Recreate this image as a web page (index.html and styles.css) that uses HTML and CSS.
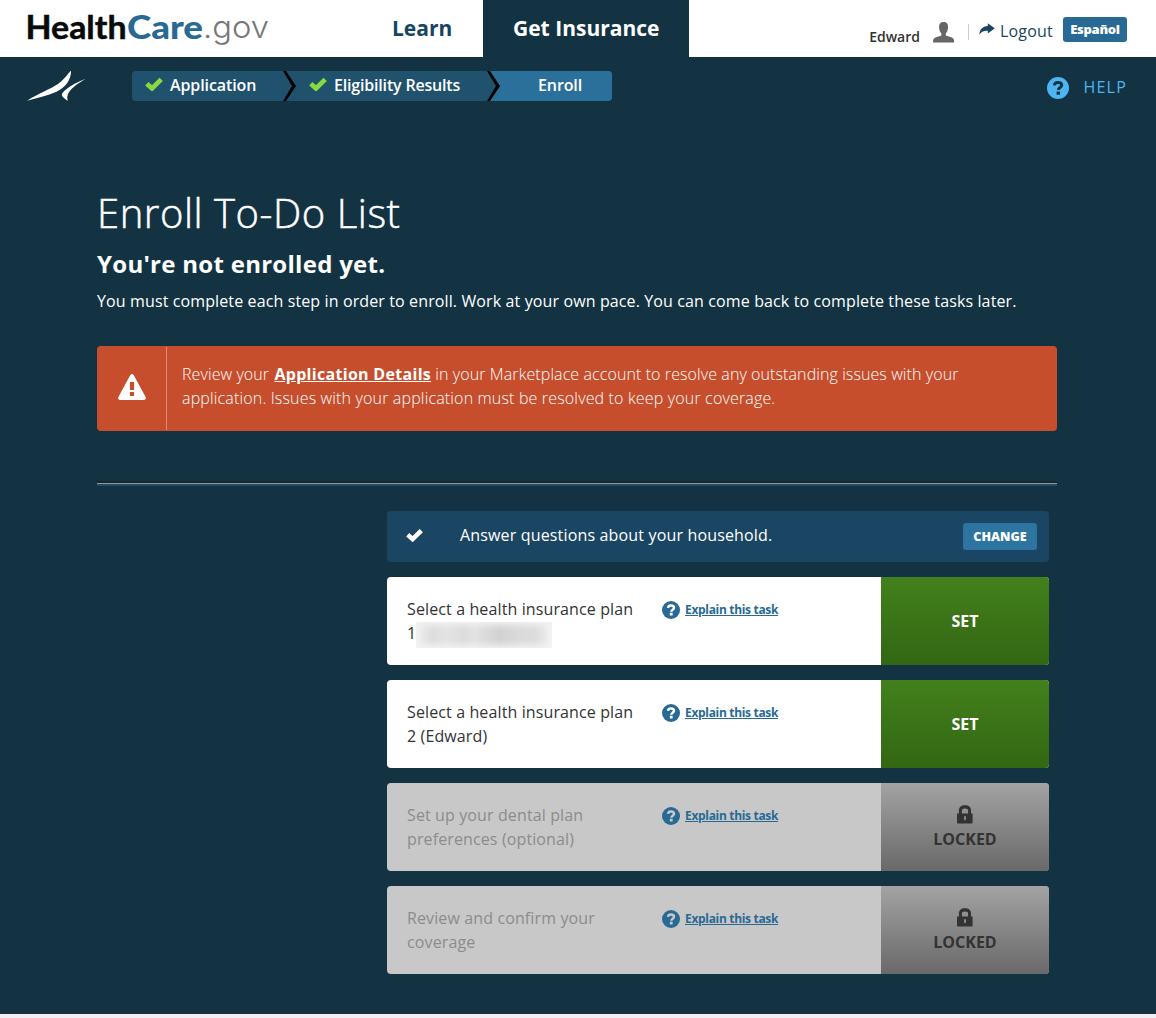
FILE: index.html
```html
<!DOCTYPE html>
<html lang="en">
<head>
<meta charset="utf-8">
<title>Enroll To-Do List | HealthCare.gov</title>
<link rel="stylesheet" href="styles.css">
</head>
<body>
<svg class="defs" aria-hidden="true">
  <symbol id="check" viewBox="0 0 18 14"><path d="M1.800 6.800 7 11.400 16.200 2.400" fill="none" stroke="currentColor" stroke-width="4.800"/></symbol>
  <symbol id="help" viewBox="0 0 22 22"><circle cx="11" cy="11" r="11" fill="currentColor"/><path d="M7.400 8.300C7.600 6.400 9 5.500 11 5.500c2.200 0 3.700 1 3.700 2.800 0 2.300-3.300 2.300-3.300 4.700" fill="none" stroke="var(--mark)" stroke-width="3"/><path d="M9.600 14.500h3.400v3.200H9.600z" fill="var(--mark)"/></symbol>
  <symbol id="lock" viewBox="0 0 16 19"><path fill-rule="evenodd" d="M0 8.500h1.900V5.600C1.900 2.200 3.900.2 8 .2s6 2 6 5.400v2.900h1.600v9.300q0 .8-.8.800H.8q-.8 0-.8-.8zM4.900 8.500h6.200V5.900c0-1.700-.8-2.400-3.100-2.400s-3.100.7-3.100 2.400zM7 11.300v2.100l.4 1.800h1.200l.4-1.800v-2.100z" fill="currentColor"/></symbol>
</svg>

<header class="topbar">
  <a class="logo">
    <svg width="246" height="44" viewBox="0 0 246 44">
      <text class="logo-health" x="-1.500" y="32" textLength="101" lengthAdjust="spacingAndGlyphs">Health</text>
      <text class="logo-care" x="100" y="32" textLength="76" lengthAdjust="spacingAndGlyphs">Care</text>
      <text class="logo-gov" x="176" y="31" textLength="66" lengthAdjust="spacingAndGlyphs">.gov</text>
    </svg>
  </a>
  <nav class="nav">
    <a class="nav-item">Learn</a>
    <a class="nav-item active">Get Insurance</a>
  </nav>
  <div class="account">
    <span class="user">Edward</span>
    <svg class="avatar" width="22" height="21" viewBox="0 0 22 21"><path d="M10.500 0C13.800 0 15.200 2 15 5.200c-.1 2.800-.9 5-2.200 6.200v2l6 2.200c1.700.7 2.400 1.900 2.400 4.900H0c0-3 .7-4.200 2.400-4.900l6-2.200v-2C7 10.200 6.200 8 6.100 5.200 5.900 2 7.300 0 10.500 0z" fill="#666"/></svg>
    <span class="divider"></span>
    <svg class="arrow" width="16" height="12" viewBox="0 0 16 12"><path d="M8.800.2 15.800 5.200 8.800 10.600V7.700C4.600 7.500 2.200 8.800.3 11.500.7 6.300 3.600 3.300 8.800 3z" fill="#1b4561"/></svg>
    <a class="logout">Logout</a>
    <a class="lang">Español</a>
  </div>
</header>

<main class="page">
  <div class="subbar">
    <svg class="swoosh" width="59" height="31" viewBox="0.500 0.500 59 31"><path d="M.3 30.300C12 23 24 18.500 31.500 13.500 37 9.500 40.500 4.500 44.500 0 44.800 9 39 17 30 21.200 21 25.500 10 27.500.3 30.300zM59 8.300C51.500 11.300 44 15 38.800 19.500c-1.800 1.700-3.400 3.500-3.500 4.700.3 2.500 3.500 4.400 5.900 6.300-.3-2-.7-3.500-.2-5.200C42.500 18.500 51 13.500 59 8.300z" fill="#fff"/></svg>
    <ol class="steps">
      <li class="step application"><svg class="step-check"><use href="#check"/></svg>Application</li>
      <li class="step eligibility"><svg class="step-check"><use href="#check"/></svg>Eligibility Results</li>
      <li class="step enroll">Enroll</li>
    </ol>
    <a class="help"><svg class="help-icon"><use href="#help"/></svg>HELP</a>
  </div>

  <div class="content">
    <h1>Enroll To-Do List</h1>
    <h2>You're not enrolled yet.</h2>
    <p class="intro">You must complete each step in order to enroll. Work at your own pace. You can come back to complete these tasks later.</p>

    <div class="alert">
      <div class="alert-icon"><svg width="28" height="27" viewBox="0 0 28 27"><path fill-rule="evenodd" d="M12.200 1.300q1.800-2.500 3.600 0L27.600 23q1 3-1.800 3H2.200Q-.6 26 .4 23zM11.900 8v8h4.200V8zM11.900 18v4h4.200v-4z" fill="#fff"/></svg></div>
      <p class="alert-text">Review your <a>Application Details</a> in your Marketplace account to resolve any outstanding issues with your<br>application. Issues with your application must be resolved to keep your coverage.</p>
    </div>

    <hr>

    <ul class="tasks">
      <li class="done"><svg class="done-check"><use href="#check"/></svg><span class="done-text">Answer questions about your household.</span><button class="change">CHANGE</button></li>
      <li class="task">
        <p class="task-name">Select a health insurance plan<br>1<span class="redacted"></span></p>
        <a class="explain"><svg class="explain-icon"><use href="#help"/></svg><span>Explain this task</span></a>
        <button class="action">SET</button>
      </li>
      <li class="task">
        <p class="task-name">Select a health insurance plan<br>2 (Edward)</p>
        <a class="explain"><svg class="explain-icon"><use href="#help"/></svg><span>Explain this task</span></a>
        <button class="action">SET</button>
      </li>
      <li class="task locked">
        <p class="task-name">Set up your dental plan<br>preferences (optional)</p>
        <a class="explain"><svg class="explain-icon"><use href="#help"/></svg><span>Explain this task</span></a>
        <button class="action"><svg class="lock"><use href="#lock"/></svg>LOCKED</button>
      </li>
      <li class="task locked">
        <p class="task-name">Review and confirm your<br>coverage</p>
        <a class="explain"><svg class="explain-icon"><use href="#help"/></svg><span>Explain this task</span></a>
        <button class="action"><svg class="lock"><use href="#lock"/></svg>LOCKED</button>
      </li>
    </ul>
  </div>
</main>
</body>
</html>
```
FILE: styles.css
```css
* { box-sizing: border-box; }
body {
  margin: 0;
  background: #f1f0f1;
  font-family: "Open Sans", "Liberation Sans", sans-serif;
  font-size: 16px;
  line-height: 24px;
  color: #333;
}
h1, h2, p, ul, ol { margin: 0; padding: 0; }
ul, ol { list-style: none; }
button { border: 0; padding: 0; font-family: inherit; }
.defs { display: none; }

.topbar { display: flex; height: 57px; background: #fff; }
.logo { width: 335px; padding: 7px 0 0 27px; }
.logo svg { display: block; overflow: visible; }
.logo text { font-family: Lato, sans-serif; font-size: 33px; }
.logo .logo-health { font-weight: 700; fill: #0a0a0a; stroke: #0a0a0a; stroke-width: 0.5px; }
.logo .logo-care { font-weight: 900; fill: #286a94; }
.logo .logo-gov { font-family: Inter, sans-serif; font-size: 31px; font-weight: 300; fill: #777; }

.nav { display: flex; margin-left: 27px; }
.nav-item { padding: 14px 30px 0; font-size: 21px; line-height: 28px; font-weight: 700; color: #174662; white-space: nowrap; }
.nav-item:first-child { width: 121px; }
.nav-item.active { width: 206px; background: #133343; color: #fff; }

.account { display: flex; align-items: flex-start; margin-left: auto; padding-right: 29px; }
.user { margin-top: 25px; font-size: 14px; font-weight: 600; }
.avatar { margin: 22px 0 0 13px; }
.divider { width: 1px; height: 16px; margin: 24px 10px 0 13px; background: #ccc; }
.arrow { margin-top: 23px; }
.logout { margin: 19px 10px 0 5px; letter-spacing: 0.2px; color: #174662; }
.lang { width: 64px; height: 25px; margin-top: 17px; border-radius: 3px; background: #286a94; color: #fff; font-size: 13px; font-weight: 800; line-height: 25px; text-align: center; letter-spacing: -0.3px; }

.page { height: 957px; background: #133343; color: #fff; }
.subbar { display: flex; height: 75px; padding: 14px 29px 0 27px; }
.steps { display: flex; width: 480px; height: 30px; margin-left: 46px; border-radius: 4px; overflow: hidden; background: #20526e; font-weight: 600; line-height: 28px; letter-spacing: -0.1px; }
.step { position: relative; display: flex; }
.application { width: 164px; padding-left: 13px; }
.eligibility { width: 204px; padding-left: 13px; letter-spacing: -0.18px; }
.application, .eligibility { z-index: 1; }
.enroll { flex: 1; margin-left: -13px; padding-left: 51px; background: #2b709b; }
.application::after, .eligibility::after {
  content: "";
  position: absolute;
  right: 0;
  top: 0;
  width: 13px;
  height: 30px;
  background: #000;
  clip-path: polygon(0 0, 3px 0, 100% 50%, 3px 100%, 0 100%, 9px 50%);
}
.eligibility::before {
  content: "";
  position: absolute;
  right: 0;
  top: 0;
  width: 13px;
  height: 30px;
  background: #20526e;
  clip-path: polygon(0 0, 100% 50%, 0 100%);
}
.step-check { width: 18px; height: 14px; margin: 6px 7px 0 0; color: #88d840; }
.help { display: flex; margin-left: auto; margin-top: 4px; color: #4cb5f2; letter-spacing: 1.200px; --mark: #133343; }
.help-icon { width: 22px; height: 22px; margin: 2px 15px 0 0; }

.content { width: 960px; margin-left: 97px; }
h1 { padding-top: 53px; font-size: 40px; line-height: 56px; font-weight: 300; letter-spacing: 0.55px; -webkit-text-stroke: 0.5px #fff; }
h2 { margin-top: 9px; font-size: 24px; line-height: 28px; font-weight: 700; letter-spacing: 0.28px; }
.intro { margin-top: 11px; height: 24px; letter-spacing: 0.12px; white-space: nowrap; }

.alert { display: flex; height: 85px; margin-top: 33px; padding: 1px 0; border-radius: 4px; background: #c74e2c; }
.alert-icon { display: flex; align-items: center; justify-content: center; width: 70px; padding-bottom: 2px; border-right: 1px solid #da8d75; }
.alert-text { padding: 15px 0 0 15px; font-weight: 300; letter-spacing: 0.16px; white-space: nowrap; }
.alert-text::first-line { letter-spacing: 0.09px; }
.alert-text a { margin-left: 1px; font-weight: 700; letter-spacing: 0.3px; text-decoration: underline; }
hr { height: 5px; margin: 50px 0 0; border: 0; background: linear-gradient(#102935 2px, #90989c 2px 3px, #28495f 3px); }

.tasks { width: 662px; margin: 25px 0 0 290px; }
.done { display: flex; height: 51px; padding: 0 12px 0 19px; border-radius: 4px; background: #1b4663; }
.done-check { width: 17px; height: 14px; margin-top: 17px; }
.done-text { margin: 12px 0 0 37px; letter-spacing: 0.16px; }
.change { width: 74px; height: 27px; margin: 12px 0 0 auto; border-radius: 3px; background: #2d74a1; color: #fff; font-size: 12.500px; font-weight: 800; }
.task { display: flex; height: 88px; margin-top: 15px; border-radius: 4px; overflow: hidden; background: #fff; color: #333; }
.task-name { width: 275px; padding: 20px 0 0 20px; letter-spacing: 0.12px; white-space: nowrap; }
.redacted {
  display: inline-block;
  width: 136px;
  height: 26px;
  margin: 1px 0 -10px;
  vertical-align: top;
  background: linear-gradient(90deg, #eee, #ddd 12%, #e3e3e3 22%, #dcdcdc 35%, #e2e2e2 43%, #d2d2d2 61%, #dadada 76%, #ddd 88%, #f0f0f0);
  box-shadow: inset 0 0 6px 3px #f3f3f3;
}
.explain { display: flex; flex: 1; padding-top: 24px; color: #286a94; font-size: 12px; font-weight: 700; line-height: 17px; letter-spacing: -0.32px; --mark: #fff; }
.explain span { text-decoration: underline; }
.explain-icon { width: 18px; height: 18px; margin-right: 5px; }
.action { display: flex; flex-direction: column; align-items: center; justify-content: center; width: 168px; padding-bottom: 1px; background: linear-gradient(#43801c, #336713); color: #fff; font-size: 16px; font-weight: 700; line-height: 20px; }
.locked { background: #c8c8c8; color: #8c8c8c; }
.locked .explain { --mark: #c8c8c8; }
.locked .action { padding-bottom: 0; background: linear-gradient(#a3a3a3, #696969); color: #333; }
.lock { width: 16px; height: 19px; margin: 0 1px 5px 0; }
```
